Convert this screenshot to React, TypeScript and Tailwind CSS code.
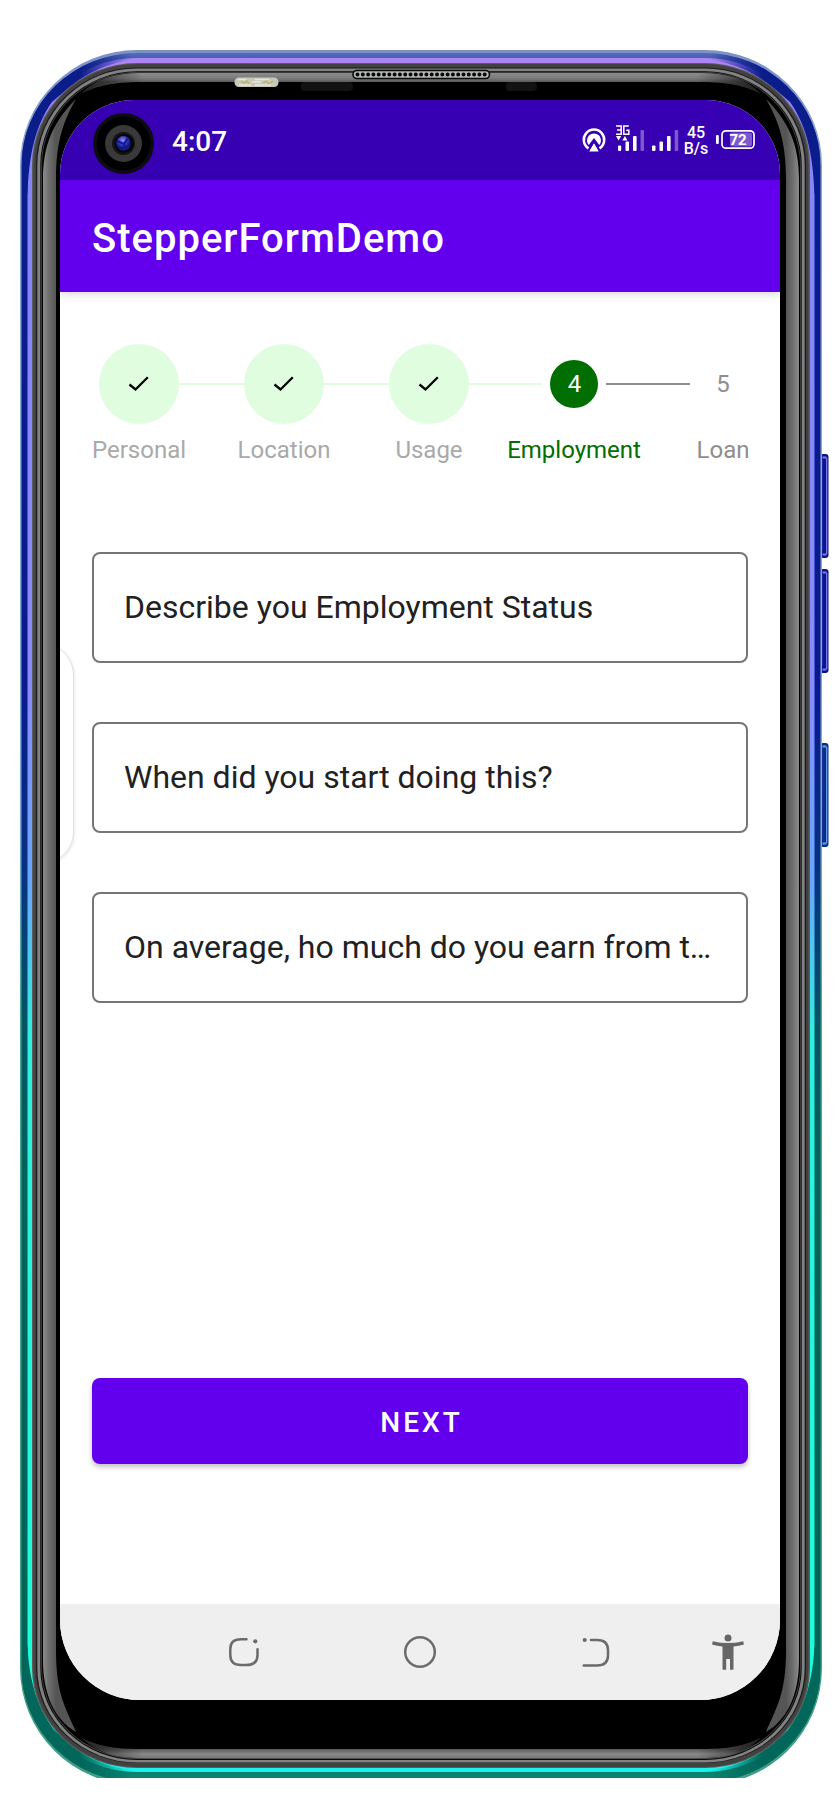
import React from "react";

const completedSteps = ["Personal", "Location", "Usage"];

const fields = [
  "Describe you Employment Status",
  "When did you start doing this?",
  "On average, ho much do you earn from t…",
];

/* Outline of the body, inset from the outer edge by `i`. */
function ring(i: number, top = i, bottom = i) {
  const l = 20 + i;
  const r = 822 - i;
  const t = 50 + top;
  const b = 1785 - bottom;
  const rx = 117 - i;
  return `M${l} ${t + 115 - top}A${rx} ${115 - top} 0 0 1 ${l + rx} ${t}H${r - rx}A${rx} ${115 - top} 0 0 1 ${r} ${t + 115 - top}V${b - 117 + bottom}A${rx} ${117 - bottom} 0 0 1 ${r - rx} ${b}H${l + rx}A${rx} ${117 - bottom} 0 0 1 ${l} ${b - 117 + bottom}Z`;
}

function SideKey({ y, fill, edge }: { y: number; fill: string; edge: string }) {
  return (
    <g>
      <rect x="820" y={y} width="8.5" height="104" rx="3" fill={fill} />
      <path d={`M826.7 ${y + 4}v96`} stroke={edge} strokeWidth="1.3" />
      <path d={`M822.5 ${y + 3.5}h4M822.5 ${y + 100.5}h4`} stroke={edge} strokeWidth="2.2" />
      <path d={`M822.4 ${y + 6}v91`} stroke="#2634a8" strokeWidth="0.8" />
    </g>
  );
}

function CornerShade() {
  return (
    <g>
      <path d="M20 150L27.500 195C29 152 36 125 52 102L66 90C82 77 100 64 140 58L137 50H20Z" fill="url(#navyShade)" />
      <path d="M21 165A116 112 0 0 1 137 52" fill="none" stroke="#7f95c9" strokeWidth="1.500" opacity="0.600" />
      <path d="M20 1680L27.500 1645C29 1682 38 1708 54 1730L68 1743C84 1756 102 1767 142 1772L137 1785H20Z" fill="url(#tealShade)" />
    </g>
  );
}

function Gloss() {
  return (
    <g>
      <path d="M43 180C43 145 53 122 76 99C64 120 56 140 56 180V900H43Z" fill="url(#sideGloss)" />
      <path d="M43 900V1660C43 1695 55 1720 76 1732C66 1708 56 1695 56 1650V900Z" fill="url(#sideGloss)" />
    </g>
  );
}

function PhoneBody() {
  return (
    <svg className="absolute inset-0 h-[1800px] w-[840px]" viewBox="0 0 840 1800" aria-hidden="true">
      <defs>
        <linearGradient id="body" x1="0" y1="50" x2="0" y2="1785" gradientUnits="userSpaceOnUse">
          <stop offset="0" stopColor="#5a73bd" />
          <stop offset="0.008" stopColor="#3c51ab" />
          <stop offset="0.04" stopColor="#0b1d8b" />
          <stop offset="0.37" stopColor="#0b198d" />
          <stop offset="0.48" stopColor="#07347f" />
          <stop offset="0.56" stopColor="#055366" />
          <stop offset="0.65" stopColor="#02645a" />
          <stop offset="0.96" stopColor="#026457" />
          <stop offset="1" stopColor="#0a8974" />
        </linearGradient>
        <linearGradient id="navyShade" x1="80" y1="0" x2="132" y2="0" gradientUnits="userSpaceOnUse">
          <stop offset="0" stopColor="#0b1d8b" />
          <stop offset="1" stopColor="#0b1d8b" stopOpacity="0" />
        </linearGradient>
        <linearGradient id="tealShade" x1="80" y1="0" x2="132" y2="0" gradientUnits="userSpaceOnUse">
          <stop offset="0" stopColor="#02665a" />
          <stop offset="1" stopColor="#02665a" stopOpacity="0" />
        </linearGradient>
        <linearGradient id="rim" x1="0" y1="50" x2="0" y2="1785" gradientUnits="userSpaceOnUse">
          <stop offset="0" stopColor="#7d91c8" />
          <stop offset="0.06" stopColor="#8aa6cf" />
          <stop offset="0.45" stopColor="#79a9d2" />
          <stop offset="0.55" stopColor="#4ca794" />
          <stop offset="1" stopColor="#3f9f84" />
        </linearGradient>
        <linearGradient id="glow" x1="0" y1="50" x2="0" y2="1785" gradientUnits="userSpaceOnUse">
          <stop offset="0" stopColor="#b887f4" />
          <stop offset="0.01" stopColor="#a883f6" />
          <stop offset="0.08" stopColor="#8485fa" />
          <stop offset="0.36" stopColor="#898bff" />
          <stop offset="0.48" stopColor="#68a7ff" />
          <stop offset="0.57" stopColor="#2ef0de" />
          <stop offset="0.97" stopColor="#18ffdb" />
          <stop offset="1" stopColor="#1cecf2" />
        </linearGradient>
        <linearGradient id="sideGloss" x1="43" y1="0" x2="56" y2="0" gradientUnits="userSpaceOnUse">
          <stop offset="0" stopColor="#8b8b8b" />
          <stop offset="0.5" stopColor="#6c6c6c" />
          <stop offset="1" stopColor="#555" />
        </linearGradient>
        <linearGradient id="topGloss" x1="0" y1="73" x2="0" y2="82" gradientUnits="userSpaceOnUse">
          <stop offset="0" stopColor="#8d8d8d" />
          <stop offset="0.6" stopColor="#7a7a7a" />
          <stop offset="1" stopColor="#5a5a5a" />
        </linearGradient>
        <linearGradient id="topFade" x1="82" y1="0" x2="758" y2="0" gradientUnits="userSpaceOnUse">
          <stop offset="0" stopColor="#000" stopOpacity="0.65" />
          <stop offset="0.09" stopColor="#000" stopOpacity="0" />
          <stop offset="0.91" stopColor="#000" stopOpacity="0" />
          <stop offset="1" stopColor="#000" stopOpacity="0.65" />
        </linearGradient>
        <linearGradient id="bottomGloss" x1="0" y1="1749" x2="0" y2="1759" gradientUnits="userSpaceOnUse">
          <stop offset="0" stopColor="#5a5a5a" />
          <stop offset="0.5" stopColor="#898989" />
          <stop offset="1" stopColor="#747474" />
        </linearGradient>
        <clipPath id="cut"><rect width="840" height="1778" /></clipPath>
        <clipPath id="outline"><path d={ring(1.5, 3, 3)} /></clipPath>
        <radialGradient id="lens" cx="0.45" cy="0.3" r="0.75">
          <stop offset="0" stopColor="#9a8ce8" />
          <stop offset="0.38" stopColor="#3d3fbe" />
          <stop offset="0.72" stopColor="#0b1475" />
          <stop offset="1" stopColor="#1435b2" />
        </radialGradient>
      </defs>
      <SideKey y={454} fill="#0b1488" edge="#7c79f5" />
      <SideKey y={569} fill="#0b1488" edge="#7c79f5" />
      <SideKey y={743} fill="#06317f" edge="#6b9bfa" />
      <g clipPath="url(#cut)">
        <path d={ring(0)} fill="url(#rim)" />
        <path d={ring(1.5, 3, 3)} fill="url(#body)" />
        <path d={ring(7.5, 8, 13)} fill="url(#glow)" />
        <g clipPath="url(#outline)">
          <CornerShade />
          <g transform="translate(842 0) scale(-1 1)"><CornerShade /></g>
        </g>
        <path d={ring(12, 13, 17)} fill="#5b5a57" />
        <path d={ring(13.5, 14, 18)} fill="#414141" />
        <path d={ring(16, 17.5, 22)} fill="#191919" />
        <path d={ring(17.3, 18.5, 22.5)} fill="#828282" />
        <path d={ring(20.3, 21.3, 25)} fill="#080808" />
        <path d={ring(21.3, 22, 26)} fill="#4c4c4c" />
        <path d={ring(22, 22.8, 27)} fill="#000" />
      </g>
      <Gloss />
      <g transform="translate(842 0) scale(-1 1)"><Gloss /></g>
      <path d="M82 93C96 79 115 73 140 73H702C727 73 746 79 760 93C744 86 730 82 702 82H140C112 82 98 86 82 93Z" fill="url(#topGloss)" />
      <path d="M82 93C96 79 115 73 140 73H702C727 73 746 79 760 93C744 86 730 82 702 82H140C112 82 98 86 82 93Z" fill="url(#topFade)" />
      <path d="M82 1738C97 1746 113 1749 140 1749H702C729 1749 745 1746 760 1738C746 1753 726 1758 702 1758H140C116 1758 98 1753 82 1738Z" fill="url(#bottomGloss)" />
      <path d="M82 1738C97 1746 113 1749 140 1749H702C729 1749 745 1746 760 1738C746 1753 726 1758 702 1758H140C116 1758 98 1753 82 1738Z" fill="url(#topFade)" />
      <rect x="234.5" y="77.5" width="44" height="9.5" rx="4.5" fill="#c9c8b8" />
      <path d="M241 81l3 2 3-2 2 3M263 83l3-2 3 3 4-3" stroke="#bdb45c" strokeWidth="1.5" fill="none" />
      <path d="M238 79.500h8m9 0h14M239 85h12m4 0h16M252 82h9" stroke="#e6e5df" strokeWidth="1.5" />
      <rect x="301" y="82" width="52" height="9" rx="4" fill="#121212" />
      <rect x="506" y="82" width="31" height="9" rx="4" fill="#121212" />
      <rect x="353" y="70.5" width="136.500" height="8" rx="4" fill="#b4b8b6" stroke="#080808" strokeWidth="1.6" />
      <path d="M357.500 74.5H485.500" stroke="#080808" strokeWidth="4" strokeLinecap="round" strokeDasharray="0.01 5.29" />
      <path d="M60 900V172Q60 100 133 100H707Q780 100 780 172V1620Q780 1700 700 1700H140Q60 1700 60 1620Z" fill="#000" />
    </svg>
  );
}

function Camera() {
  return (
    <svg className="absolute top-[13px] left-[33px] size-[61px]" viewBox="0 0 61 61" aria-hidden="true">
      <circle cx="30.5" cy="30.500" r="30.500" fill="#0c0c12" />
      <circle cx="30.500" cy="30.500" r="27" fill="#000" />
      <circle cx="30.500" cy="30.500" r="18.500" fill="#393939" />
      <circle cx="30.500" cy="30.500" r="11.500" fill="#151515" />
      <circle cx="31" cy="30.500" r="9.500" fill="#050508" />
      <circle cx="30.500" cy="30.300" r="7.300" fill="url(#lens)" />
      <path d="M24 28l7 3 4-6M31 31l2 6" stroke="#1017a0" strokeWidth="2" fill="none" />
    </svg>
  );
}

function StatusIcons() {
  return (
    <svg className="mt-5 h-[44px] w-[176px]" viewBox="580 120 176 44" aria-label="Network status">
      <path d="M588.5 148.4A10.200 10.200 0 1 1 599.5 148.400" strokeWidth="2.500" fill="none" stroke="#fff" />
      <path d="M588.7 145A7 7 0 1 1 599.300 145L594 138Z" fill="#fff" />
      <path d="M594 142.500l5.300 9H588.700Z" fill="#fff" stroke="#3700b3" strokeWidth="1.200" />
      <path d="M594 143.500l4.700 8H589.300Z" fill="#fff" />
      <path d="M616 126h5.200v8.300H616M617 130h4M628.800 126h-5v8.300h5v-4h-2.500" fill="none" stroke="#fff" strokeWidth="1.500" />
      <path d="M616 136h5.200l-2.600 4.500ZM622.300 140.500h5.200l-2.600-4.500Z" fill="#fff" />
      <g fill="#fff">
        <rect x="618" y="145.500" width="3.200" height="5.500" rx="1" />
        <rect x="625.500" y="141.500" width="3.500" height="9.500" rx="1" />
        <rect x="633" y="136" width="3.600" height="15" rx="1" />
        <rect x="640.500" y="130" width="3.500" height="21" rx="1" opacity="0.350" />
        <rect x="652" y="145.500" width="3.500" height="5.500" rx="1" />
        <rect x="659.500" y="141.500" width="3.500" height="9.500" rx="1" />
        <rect x="667" y="136" width="3.600" height="15" rx="1" />
        <rect x="674.700" y="130" width="3.500" height="21" rx="1" opacity="0.350" />
        <rect x="716" y="135" width="2.800" height="9" rx="1" />
        <rect x="730" y="132.500" width="22" height="14" rx="2" opacity="0.350" />
      </g>
      <rect x="722" y="130.800" width="32" height="17.400" rx="4" fill="none" stroke="#fff" strokeWidth="1.700" />
      <g fill="#fff" className="font-[Roboto,sans-serif] font-medium" textAnchor="middle">
        <text x="696" y="138" fontSize="16">45</text>
        <text x="696" y="154" fontSize="16">B/s</text>
        <text x="738" y="145" fontSize="15" fontWeight="700">72</text>
      </g>
    </svg>
  );
}

function Stepper() {
  return (
    <div className="flex h-[120px] items-start text-[24px] leading-7">
      {completedSteps.map((label, i) => (
        <React.Fragment key={label}>
          <div className="-mx-[7px] flex w-[94px] flex-none flex-col items-center gap-3 text-[#a9a9a9]">
            <div className="flex size-20 items-center justify-center rounded-full bg-[#e0fddf]">
              <svg className="size-6" viewBox="0 0 24 24" aria-label="Completed">
                <path d="M2.500 12.500l6 5L20.800 5.200" fill="none" stroke="#000" strokeWidth="2.300" />
              </svg>
            </div>
            <span>{label}</span>
          </div>
          <div className={i === 2 ? "mt-[39px] h-0.5 w-[73px] flex-none bg-[#e0fddf]" : "mt-[39px] h-0.5 w-[65px] flex-none bg-[#e0fddf]"} />
        </React.Fragment>
      ))}
      <div className="-mx-[35px] flex w-[134px] flex-none flex-col items-center gap-7 pt-4 text-[#006e00]">
        <div className="flex size-12 items-center justify-center rounded-full bg-[#006e00] pl-px text-white">4</div>
        <span>Employment</span>
      </div>
      <div className="mt-[39px] h-0.5 w-[84px] flex-none bg-[#8e8e8e]" />
      <div className="ml-[7px] flex w-[52px] flex-none flex-col items-center gap-7 pt-4 text-[#8e8e8e]">
        <div className="flex size-12 items-center justify-center">5</div>
        <span>Loan</span>
      </div>
    </div>
  );
}

function NavBar() {
  return (
    <nav className="relative flex h-24 items-center justify-center bg-[#efefef]">
      <svg className="h-24 w-[720px]" viewBox="60 1604 720 96" fill="none" stroke="#6b6b6b" strokeWidth="2.500" strokeLinecap="round">
        <path d="M246.500 1639.300H241Q230.300 1639.300 230.300 1649V1655Q230.300 1665 241 1665H246.500Q257.500 1665 257.500 1655V1649.300" />
        <circle cx="255.300" cy="1641.300" r="2.100" fill="#6b6b6b" stroke="none" />
        <circle cx="420" cy="1652" r="14.800" />
        <path d="M591 1640H597Q608 1640 608 1650V1655.500Q608 1665.500 597 1665.500H583.700" />
        <circle cx="584.700" cy="1640" r="2.100" fill="#6b6b6b" stroke="none" />
        <g fill="#666" stroke="none">
          <circle cx="728" cy="1638" r="3.500" />
          <path d="M712.800 1641.200Q728 1645 743.200 1641.200L744 1644.400Q739 1646 733.500 1646.500V1669.800H730V1659H726.200V1669.800H722.500V1646.500Q717 1646 712 1644.400Z" />
        </g>
      </svg>
    </nav>
  );
}

export default function App() {
  return (
    <div className="relative h-[1800px] w-[840px] overflow-hidden bg-white px-[60px] pt-[100px] font-[Roboto,sans-serif]">
      <PhoneBody />
      <div className="relative flex h-[1600px] w-[720px] flex-col overflow-hidden rounded-t-[74px] rounded-b-[80px] bg-white">
        <header className="flex h-20 flex-none items-start justify-between bg-[#3700b3] pr-6 pl-[112px]">
          <Camera />
          <span className="mt-[26px] text-[28px] leading-8 font-medium text-white">4:07</span>
          <StatusIcons />
        </header>
        <div className="relative flex h-28 flex-none items-center bg-[#6200ee] pt-1.5 pl-8 shadow-[0_2px_8px_rgba(0,0,0,0.16)]">
          <h1 className="text-[40px] leading-[48px] font-medium tracking-[1px] text-white">StepperFormDemo</h1>
        </div>

        <main className="flex flex-1 flex-col px-8 pt-[52px]">
          <div className="pl-[7px]">
            <Stepper />
          </div>
          <form className="mt-[88px] flex flex-col gap-[59px]">
            {fields.map((field) => (
              <div key={field} className="flex h-[111px] items-center rounded-lg border-2 border-[#757575] px-[30px] pb-0.5 text-[32px] whitespace-nowrap text-[#212121]">
                <span>{field}</span>
              </div>
            ))}
          </form>
          <button className="mt-[375px] h-[86px] rounded-lg bg-[#6200ee] pt-[3px] pl-[3px] text-[28px] font-medium tracking-[3px] text-white shadow-[0_3px_5px_rgba(0,0,0,0.24)]">
            NEXT
          </button>
        </main>
        <div className="absolute top-[543px] -left-[50px] h-[221px] w-[63.500px] rounded-[38px] border border-[#e2e2e2] bg-white shadow-[1px_1px_3px_rgba(0,0,0,0.08)]" />
        <NavBar />
      </div>
    </div>
  );
}
